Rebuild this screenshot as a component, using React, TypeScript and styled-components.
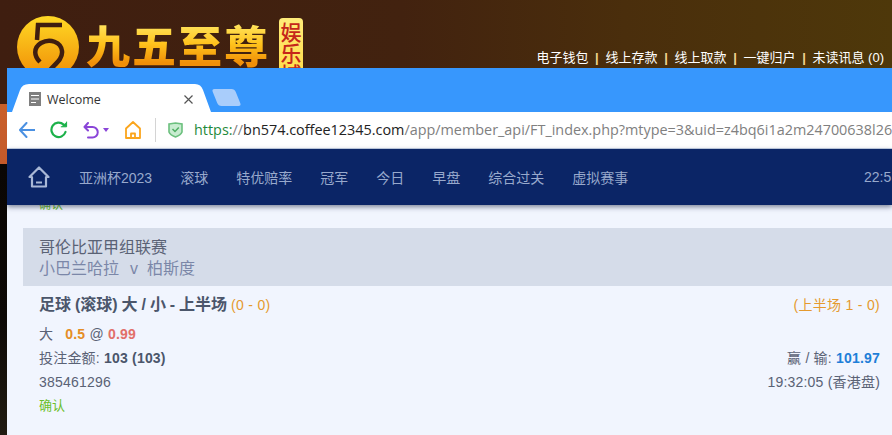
import styled, { createGlobalStyle } from 'styled-components';

const SANS = `"Liberation Sans", "Noto Sans CJK SC", sans-serif`;
const URL_FONT = `"Open Sans", "Noto Sans", sans-serif`;

const NAV_ITEMS = ['亚洲杯2023', '滚球', '特优赔率', '冠军', '今日', '早盘', '综合过关', '虚拟赛事'];
const HEADER_LINKS = ['电子钱包', '线上存款', '线上取款', '一键归户', '未读讯息 (0)'];

const GlobalStyle = createGlobalStyle`
  html, body {
    margin: 0;
    padding: 0;
    background: #0a0705;
  }
  * {
    box-sizing: border-box;
  }
`;

const Page = styled.div`
  width: 892px;
  height: 435px;
  overflow: hidden;
  display: flex;
  flex-direction: column;
  font-family: ${SANS};
`;

const SiteHeader = styled.header`
  flex: 0 0 68px;
  height: 68px;
  overflow: hidden;
  display: flex;
  justify-content: space-between;
  padding: 16px 8px 0 17px;
  background: linear-gradient(90deg, #3f1e10 0%, #42220f 45%, #4a2e0c 70%, #4e380a 100%);
`;

const Brand = styled.div`
  display: flex;
  align-items: flex-start;
`;

const BrandName = styled.div`
  margin: 1px 0 0 7px;
  font-family: "Noto Sans CJK SC", sans-serif;
  font-size: 44px;
  line-height: 54px;
  font-weight: 900;
  letter-spacing: 2px;
  white-space: nowrap;
  color: transparent;
  background: linear-gradient(180deg, #ffe25a 15%, #ffc21c 50%, #f08f08 85%);
  -webkit-background-clip: text;
  background-clip: text;
`;

const BrandBadge = styled.div`
  margin: 2px 0 0 9px;
  width: 24px;
  height: 70px;
  border-radius: 4px;
  writing-mode: vertical-rl;
  font-family: "Noto Sans CJK SC", sans-serif;
  font-size: 21px;
  line-height: 24px;
  font-weight: 500;
  text-align: center;
  color: #c5261a;
  background: linear-gradient(180deg, #ffec7a 0%, #ffd83c 100%);
`;

const HeaderLinks = styled.nav`
  display: flex;
  align-items: center;
  height: 16px;
  margin-top: 34px;
  font-size: 13px;
  line-height: 16px;
  color: #fff;
  white-space: nowrap;
`;

const HeaderSep = styled.span`
  display: inline-block;
  width: 17px;
  text-align: center;
  font-weight: 700;
  color: #f2d58f;
`;

const Desktop = styled.div`
  flex: 1;
  min-height: 0;
  display: flex;
`;

const LeftStrip = styled.div`
  flex: 0 0 7px;
  background: linear-gradient(
    180deg,
    #3f1e10 0,
    #3f1e10 36px,
    #c9602a 36px,
    #c4592a 96px,
    #0a0604 96px,
    #0d0906 250px,
    #221c12 100%
  );
`;

const BrowserWindow = styled.div`
  flex: 1;
  min-width: 0;
  display: flex;
  flex-direction: column;
  overflow: hidden;
  background: #f1f5fe;
`;

const TabBar = styled.div`
  flex: 0 0 44px;
  display: flex;
  align-items: flex-end;
  padding-left: 5px;
  background: #3797fd;
`;

const Tab = styled.div`
  width: 199px;
  height: 28px;
  display: flex;
  align-items: center;
  padding: 2px 18px 0 17px;
  background: #fff;
  clip-path: path('M0 28 L8 6 Q10 0 17 0 L183 0 Q189 0 191 6 L199 28 Z');
`;

const TabTitle = styled.span`
  flex: 1;
  margin-left: 6px;
  font-family: ${URL_FONT};
  font-size: 12.5px;
  color: #333;
`;

const NewTab = styled.div`
  width: 23px;
  height: 17px;
  margin: 0 0 6px 4px;
  border-radius: 3px;
  background: #a9cdfb;
  transform: skewX(22deg);
`;

const Toolbar = styled.div`
  flex: 0 0 37px;
  display: flex;
  align-items: center;
  padding-left: 12px;
  background: #fff;
  border-bottom: 1px solid #c9d6e8;
`;

const ToolIcon = styled.svg<{ $gap?: number }>`
  flex: none;
  display: block;
  margin-left: ${(p) => p.$gap ?? 0}px;
  fill: none;
  stroke-linecap: round;
  stroke-linejoin: round;
`;

const ToolDivider = styled.div`
  flex: none;
  width: 1px;
  height: 24px;
  margin: 0 12px 0 14px;
  background: #d4d4d4;
`;

const UrlText = styled.div`
  margin-left: 11px;
  font-family: ${URL_FONT};
  font-size: 14.4px;
  line-height: 34px;
  white-space: nowrap;
  color: #808080;
`;

const UrlScheme = styled.span`
  color: #1f8a3b;
`;

const UrlHost = styled.span`
  color: #222;
`;

const MainNav = styled.div`
  position: relative;
  z-index: 2;
  flex: 0 0 56px;
  display: flex;
  align-items: center;
  padding-left: 21px;
  background: #0b2566;
  box-shadow: 0 2px 5px rgba(30, 40, 70, 0.55);
  white-space: nowrap;
`;

const NavItems = styled.div`
  display: flex;
  gap: 28px;
  margin-left: 29px;
  flex: 1;
`;

const NavItem = styled.span`
  font-size: 14px;
  color: #98a9cc;
`;

const NavClock = styled.span`
  font-size: 14px;
  color: #98a9cc;
  width: 28px;
  overflow: hidden;
`;

const Content = styled.div`
  flex: 1;
  min-height: 0;
  overflow: hidden;
  padding-left: 16px;
`;

const ClippedConfirm = styled.div`
  margin: -9px 0 0 16px;
  height: 32px;
  font-size: 12px;
  line-height: 18px;
  color: #6bbf2a;
`;

const LeagueHeader = styled.div`
  height: 58px;
  padding: 9px 16px 0;
  background: #d5dce9;
  font-size: 16px;
  line-height: 21px;
`;

const LeagueName = styled.div`
  color: #5a6275;
`;

const Teams = styled.div`
  display: flex;
  color: #7b87a8;
`;

const TeamsVs = styled.span`
  margin: 0 9px 0 11px;
`;

const BetRow = styled.div`
  display: flex;
  justify-content: space-between;
  padding: 8px 12px 0 16px;
`;

const BetColumn = styled.div<{ $right?: boolean }>`
  display: flex;
  flex-direction: column;
  align-items: ${(p) => (p.$right ? 'flex-end' : 'flex-start')};
`;

const BetTitle = styled.div`
  height: 28px;
  font-size: 16px;
  line-height: 22px;
  font-weight: 700;
  word-spacing: -0.5px;
  color: #4b566b;
`;

const Score = styled.span`
  font-size: 14px;
  font-weight: 400;
  letter-spacing: 0.3px;
  word-spacing: 0;
  color: #e59a2e;
`;

const BetLine = styled.div`
  height: 24px;
  font-size: 14px;
  line-height: 24px;
  letter-spacing: 0.2px;
  color: #5a6275;
  white-space: nowrap;
`;

const Pick = styled.span`
  margin-right: 8px;
`;

const Strong = styled.b<{ $color?: string }>`
  color: ${(p) => p.$color ?? '#4b566b'};
`;

const Status = styled(BetLine)`
  font-size: 13px;
  letter-spacing: 0;
  color: #6bbf2a;
`;

const BrandMark = () => (
  <svg width="62" height="62" viewBox="0 0 62 62" style={{ flex: 'none' }}>
    <defs>
      <linearGradient id="markFill" x1="0" y1="0" x2="0" y2="1">
        <stop offset="0" stopColor="#ffd925" />
        <stop offset="1" stopColor="#f08c05" />
      </linearGradient>
    </defs>
    <circle cx="31" cy="31" r="31" fill="url(#markFill)" />
    <path
      d="M45 9 H21 L20 24 M23 46 C17 40 16 32 24 27 C33 22 44 26 45 35 C46 43 38 48 33 54"
      fill="none"
      stroke="#3f1e10"
      strokeWidth="4.5"
    />
  </svg>
);

const BackIcon = () => (
  <ToolIcon width="16" height="16" viewBox="0 0 16 16" stroke="#4a90e2" strokeWidth="2">
    <path d="M7.5 1 L1 8 L7.5 15 M1.5 8 H15.5" />
  </ToolIcon>
);

const ReloadIcon = () => (
  <ToolIcon $gap={15} width="18" height="18" viewBox="0 0 18 18" stroke="#1cb14a" strokeWidth="2.2">
    <path d="M15.5 11 A7.2 7.2 0 1 1 13.6 3.6" />
    <path d="M11.2 5.8 H16.6 V1" fill="#1cb14a" strokeWidth="1" />
  </ToolIcon>
);

const UndoIcon = () => (
  <ToolIcon $gap={15} width="16" height="17" viewBox="0 0 16 17" stroke="#8a45d8" strokeWidth="2">
    <path d="M5 1 L1.5 5 L5 8.5 M2 5 H9.5 A5 5 0 0 1 9.5 15.5 H5" />
  </ToolIcon>
);

const CaretIcon = () => (
  <svg width="6" height="4" viewBox="0 0 6 4" style={{ flex: 'none', marginLeft: 4 }}>
    <path d="M0 0 H6 L3 4 Z" fill="#8a45d8" />
  </svg>
);

const HomeIcon = () => (
  <ToolIcon $gap={16} width="16" height="18" viewBox="0 0 16 18" stroke="#fba51c" strokeWidth="1.8">
    <path d="M1 7.5 L8 1 L15 7.5 V17 H1 Z M6 17 V12.5 H10 V17" />
  </ToolIcon>
);

const ShieldIcon = () => (
  <svg width="15" height="16" viewBox="0 0 15 16" style={{ flex: 'none' }}>
    <path d="M1 2 L7.5 1 L14 2 V10 Q13 13 7.5 15 Q2 13 1 10 Z" fill="#c8ecd0" stroke="#6cc07e" strokeWidth="1.6" />
    <path d="M4.5 7 L7 9.5 L10.8 5.5" fill="none" stroke="#4fae63" strokeWidth="1.5" />
  </svg>
);

const PageIcon = () => (
  <svg width="12" height="14" viewBox="0 0 12 14" style={{ flex: 'none' }}>
    <rect width="12" height="14" fill="#7f7f7f" />
    <path d="M2 3.5 H10 M2 7 H10 M2 10.5 H7" stroke="#fff" strokeWidth="1.2" />
  </svg>
);

const CloseIcon = () => (
  <svg width="9" height="9" viewBox="0 0 9 9" style={{ flex: 'none' }}>
    <path d="M0.5 0.5 L8.5 8.5 M8.5 0.5 L0.5 8.5" stroke="#555" strokeWidth="1.2" />
  </svg>
);

const NavHomeIcon = () => (
  <svg width="22" height="22" viewBox="0 0 22 22" style={{ flex: 'none' }}>
    <path
      d="M1.5 11 L11 1.5 L20.5 11 H18 V20.5 H4 V11 Z"
      fill="none"
      stroke="#a9b8d6"
      strokeWidth="2.2"
      strokeLinejoin="round"
    />
    <path d="M8 16.5 H14" stroke="#a9b8d6" strokeWidth="2" />
  </svg>
);

const App = () => (
  <>
    <GlobalStyle />
    <Page>
      <SiteHeader>
        <Brand>
          <BrandMark />
          <BrandName>九五至尊</BrandName>
          <BrandBadge>娱乐城</BrandBadge>
        </Brand>
        <HeaderLinks>
          {HEADER_LINKS.map((link, i) => (
            <span key={link}>
              {i > 0 && <HeaderSep>|</HeaderSep>}
              {link}
            </span>
          ))}
        </HeaderLinks>
      </SiteHeader>
      <Desktop>
        <LeftStrip />
        <BrowserWindow>
          <TabBar>
            <Tab>
              <PageIcon />
              <TabTitle>Welcome</TabTitle>
              <CloseIcon />
            </Tab>
            <NewTab />
          </TabBar>
          <Toolbar>
            <BackIcon />
            <ReloadIcon />
            <UndoIcon />
            <CaretIcon />
            <HomeIcon />
            <ToolDivider />
            <ShieldIcon />
            <UrlText>
              <UrlScheme>https:</UrlScheme>//<UrlHost>bn574.coffee12345.com</UrlHost>
              /app/member_api/FT_index.php?mtype=3&amp;uid=z4bq6i1a2m24700638l26
            </UrlText>
          </Toolbar>
          <MainNav>
            <NavHomeIcon />
            <NavItems>
              {NAV_ITEMS.map((item) => (
                <NavItem key={item}>{item}</NavItem>
              ))}
            </NavItems>
            <NavClock>22:5</NavClock>
          </MainNav>
          <Content>
            <ClippedConfirm>确认</ClippedConfirm>
            <LeagueHeader>
              <LeagueName>哥伦比亚甲组联赛</LeagueName>
              <Teams>
                <span>小巴兰哈拉</span>
                <TeamsVs>v</TeamsVs>
                <span>柏斯度</span>
              </Teams>
            </LeagueHeader>
            <BetRow>
              <BetColumn>
                <BetTitle>
                  足球 (滚球) 大 / 小 - 上半场 <Score>(0 - 0)</Score>
                </BetTitle>
                <BetLine>
                  <Pick>大</Pick> <Strong $color="#e58e26">0.5</Strong> @ <Strong $color="#e2706a">0.99</Strong>
                </BetLine>
                <BetLine>
                  投注金额: <Strong>103 (103)</Strong>
                </BetLine>
                <BetLine>385461296</BetLine>
                <Status>确认</Status>
              </BetColumn>
              <BetColumn $right>
                <BetTitle>
                  <Score>(上半场 1 - 0)</Score>
                </BetTitle>
                <BetLine>&nbsp;</BetLine>
                <BetLine>
                  赢 / 输: <Strong $color="#1e7fd8">101.97</Strong>
                </BetLine>
                <BetLine>19:32:05 (香港盘)</BetLine>
              </BetColumn>
            </BetRow>
          </Content>
        </BrowserWindow>
      </Desktop>
    </Page>
  </>
);

export default App;
